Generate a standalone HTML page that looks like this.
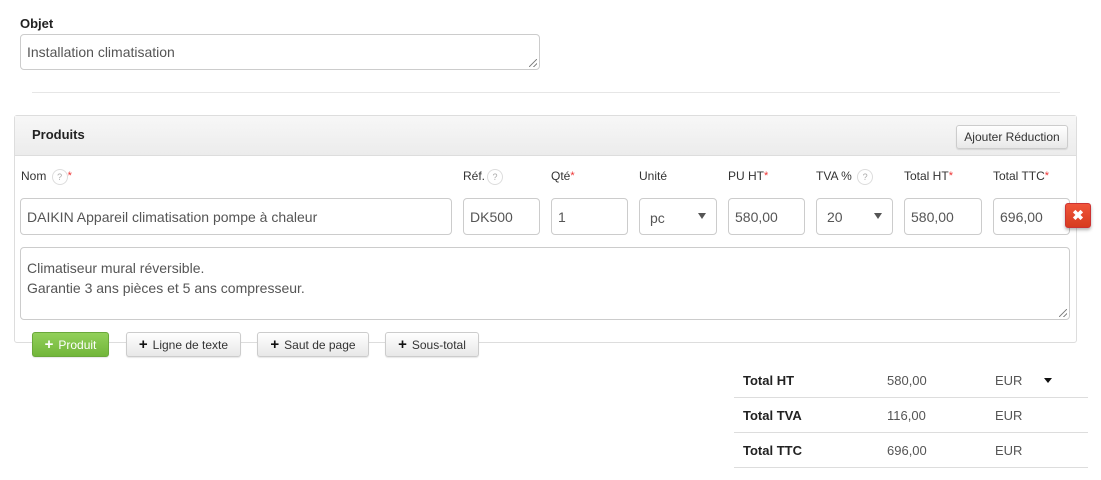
<!DOCTYPE html>
<html><head><meta charset="utf-8"><style>
*{box-sizing:border-box;margin:0;padding:0}
body{width:1101px;height:480px;background:#fff;font-family:"Liberation Sans",Arial,sans-serif;position:relative;overflow:hidden;color:#333}
.a{position:absolute}
.inp{position:absolute;border:1px solid #ccc;border-radius:4px;background:#fff;color:#555;font-size:14px;padding:0 6px;display:flex;align-items:center}
.lbl{position:absolute;font-size:12px;color:#333;top:168px;line-height:16px;height:18px;white-space:nowrap}
.req{color:#e33;font-size:11px;position:relative;top:-1px}
.q{display:inline-block;width:16px;height:16px;border:1px solid #ddd;border-radius:50%;font-size:9px;color:#aaa;text-align:center;line-height:14px;vertical-align:top;margin:1px 0 0 2px}
.btn{position:absolute;top:332px;height:25px;border:1px solid #ccc;border-radius:3px;background:linear-gradient(#fff,#e8e8e8);font-size:12px;color:#333;display:flex;align-items:center;justify-content:center;box-shadow:0 1px 1px rgba(0,0,0,.1)}
.pl{font-weight:bold;font-size:15px;margin-right:5px;color:#111;line-height:10px}
.car{position:absolute;right:10px;top:14px;width:0;height:0;border-left:4px solid transparent;border-right:4px solid transparent;border-top:6px solid #555}
.grip{position:absolute;right:2px;bottom:2px;width:8px;height:8px;background:linear-gradient(135deg,transparent 45%,#888 45%,#888 55%,transparent 55%,transparent 72%,#888 72%,#888 82%,transparent 82%)}
.row{position:absolute;left:734px;width:354px;height:35px;border-bottom:1px solid #ddd;font-size:13px}
.row span{position:absolute;top:10px}
</style></head><body>
<div class="a" style="left:20px;top:16px;font-size:13px;font-weight:bold;color:#222">Objet</div>
<div class="inp" style="left:20px;top:34px;width:520px;height:36px">Installation climatisation<div class="grip"></div></div>
<div class="a" style="left:32px;top:92px;width:1028px;height:1px;background:#e6e6e6"></div>

<div class="a" style="left:14px;top:115px;width:1063px;height:228px;border:1px solid #ddd;border-radius:3px"></div>
<div class="a" style="left:15px;top:116px;width:1061px;height:40px;background:linear-gradient(#f7f7f7,#ececec);border-bottom:1px solid #ddd"></div>
<div class="a" style="left:32px;top:127px;font-size:13px;font-weight:bold;color:#222">Produits</div>
<div class="btn" style="left:956px;top:125px;width:112px;height:24px;font-size:12px">Ajouter Réduction</div>

<div class="lbl" style="left:21px">Nom <span class="q">?</span><span class="req">*</span></div>
<div class="lbl" style="left:463px">Réf.<span class="q">?</span></div>
<div class="lbl" style="left:551px">Qté<span class="req">*</span></div>
<div class="lbl" style="left:639px">Unité</div>
<div class="lbl" style="left:728px">PU HT<span class="req">*</span></div>
<div class="lbl" style="left:816px">TVA % <span class="q">?</span></div>
<div class="lbl" style="left:904px">Total HT<span class="req">*</span></div>
<div class="lbl" style="left:993px">Total TTC<span class="req">*</span></div>

<div class="inp" style="left:20px;top:198px;width:432px;height:37px">DAIKIN Appareil climatisation pompe à chaleur</div>
<div class="inp" style="left:463px;top:198px;width:77px;height:37px">DK500</div>
<div class="inp" style="left:551px;top:198px;width:77px;height:37px">1</div>
<div class="inp" style="left:639px;top:198px;width:78px;height:37px;padding-left:10px;padding-top:3px">pc<div class="car"></div></div>
<div class="inp" style="left:728px;top:198px;width:77px;height:37px">580,00</div>
<div class="inp" style="left:816px;top:198px;width:77px;height:37px;padding-left:10px">20<div class="car"></div></div>
<div class="inp" style="left:904px;top:198px;width:78px;height:37px">580,00</div>
<div class="inp" style="left:993px;top:198px;width:77px;height:37px">696,00</div>
<div class="a" style="left:1065px;top:203px;width:26px;height:25px;background:linear-gradient(#f0553a,#d63c1f);border:1px solid #c33;border-radius:3px;color:#fff;font-weight:bold;font-size:14px;text-align:center;line-height:22px;box-shadow:0 2px 3px rgba(0,0,0,.3)">✖</div>

<div class="inp" style="left:20px;top:247px;width:1050px;height:73px;padding-top:10px;line-height:20px;display:block">Climatiseur mural réversible.<br>Garantie 3 ans pièces et 5 ans compresseur.<div class="grip"></div></div>

<div class="btn" style="left:32px;width:77px;background:linear-gradient(#92d05a,#72b63a);border-color:#6aa83a;color:#fff"><span class="pl" style="color:#fff">+</span>Produit</div>
<div class="btn" style="left:126px;width:115px"><span class="pl">+</span>Ligne de texte</div>
<div class="btn" style="left:257px;width:112px"><span class="pl">+</span>Saut de page</div>
<div class="btn" style="left:385px;width:94px"><span class="pl">+</span>Sous-total</div>

<div class="row" style="top:363px"><span style="left:9px;font-weight:bold;color:#222">Total HT</span><span style="left:153px;color:#555">580,00</span><span style="left:261px;color:#555">EUR</span><span style="left:310px;top:15px;width:0;height:0;border-left:4px solid transparent;border-right:4px solid transparent;border-top:5px solid #111"></span></div>
<div class="row" style="top:398px"><span style="left:9px;font-weight:bold;color:#222">Total TVA</span><span style="left:153px;color:#555">116,00</span><span style="left:261px;color:#555">EUR</span></div>
<div class="row" style="top:433px"><span style="left:9px;font-weight:bold;color:#222">Total TTC</span><span style="left:153px;color:#555">696,00</span><span style="left:261px;color:#555">EUR</span></div>
</body></html>
